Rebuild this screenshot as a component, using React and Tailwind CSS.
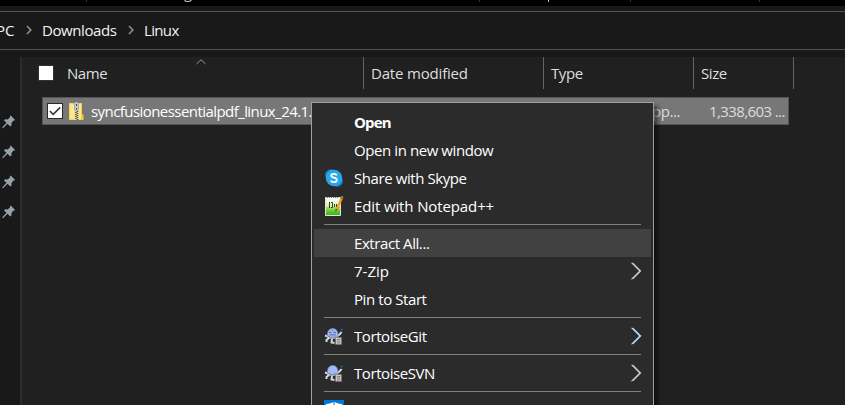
const font = 'font-["Open_Sans","Noto_Sans",sans-serif]';

function Crumb() {
  return (
    <svg className="h-2.5 w-1.5 shrink-0" viewBox="0 0 6 10" fill="none" stroke="#8a8a8a" strokeWidth="1.7">
      <path d="M1 1 L4.8 5 L1 9" />
    </svg>
  );
}

function Pin() {
  return (
    <svg className="h-3.5 w-3.5 shrink-0" viewBox="0 0 14 14" fill="#95a2a9">
      <path d="M8.7 .6 13.1 5 12.2 5.8 11.4 5.6 9.4 8.2 9.6 10.3 8.3 11.4 5.5 8.8 1.3 12.9 .3 13.2 .6 12.1 4.5 7.8 2 5.4 3.1 4.3 5.5 4.4 8 2.4 7.8 1.4Z" />
    </svg>
  );
}

function Zip() {
  return (
    <svg className="h-[19px] w-[15px] shrink-0" viewBox="0 0 15 19">
      <path d="M0 1h13v17H0z" fill="#f5cf56" />
      <path d="M1 2h11v15H1z" fill="#fde690" />
      <path d="M12 12h1.5L14.5 13v5H12z" fill="#f3c93e" />
      <path d="M5 1h5v17H5z" fill="#efdc9a" />
      <path d="M7 8v10" stroke="#4c4c46" strokeWidth="1.6" strokeDasharray="1 1" />
      <path d="M8.5 9v9" stroke="#4c4c46" strokeWidth="1.6" strokeDasharray="1 1" />
      <path d="M5.5 1.5Q5.5 0 7.5 0T9.5 1.5V7L8.5 9h-2l-1-2z" fill="#c6cbd0" stroke="#8c9298" strokeWidth=".6" />
      <path d="M7 2h1v2H7zM7 6h1v1.5H7z" fill="#343a40" />
    </svg>
  );
}

function Skype() {
  return (
    <svg className="h-[18px] w-[18px]" viewBox="0 0 18 18">
      <circle cx="6" cy="6" r="5.8" fill="#1488d3" />
      <circle cx="12" cy="12" r="5.8" fill="#1488d3" />
      <circle cx="9" cy="9" r="8.2" fill="#2aa7ea" />
      <path d="M11.8 6.2Q11 4.9 9 4.9C7.2 4.9 6.2 5.7 6.2 6.8 6.2 9.4 11.8 8 11.8 10.9 11.8 12.3 10.7 13.1 8.9 13.1 7.2 13.1 6.2 12.4 5.9 11.4" fill="none" stroke="#fff" strokeWidth="1.8" />
    </svg>
  );
}

function Notepad() {
  return (
    <svg className="h-5 w-[19px]" viewBox="0 0 19 20">
      <defs>
        <linearGradient id="grass" x1="0" y1="0" x2="0" y2="1">
          <stop offset=".15" stopColor="#f5f8ef" />
          <stop offset=".6" stopColor="#d0ed91" />
          <stop offset=".82" stopColor="#55c923" />
          <stop offset="1" stopColor="#36a514" />
        </linearGradient>
      </defs>
      <path d="M.5 1.5h15v18H.5z" fill="url(#grass)" stroke="#dfe5dc" />
      <path d="M1 11h14v8H1z" fill="#4fbe22" opacity=".45" />
      <path d="M2 1.5h12" stroke="#777" strokeDasharray="1 1" />
      <path d="M4.5 6v6M6 6.5h1.5v5H6M9.5 8v3M11.5 8v3" fill="none" stroke="#303830" />
      <path d="M17 1.5 11.5 14" stroke="#ef9d25" strokeWidth="2.4" />
      <path d="m17.5 0-1.2 3" stroke="#a66c45" strokeWidth="2.4" />
      <path d="m10.6 13 1.8.8-2 2z" fill="#443425" />
    </svg>
  );
}

function Tortoise({ face }) {
  return (
    <svg className="h-[18px] w-5" viewBox="0 0 20 18">
      <path d="M4 9.5 1 8.5M5 11 2.5 13v2M8 12l-.5 3.5 3 .5M12 10l4-3 2-3" fill="none" stroke="#d5d9e1" strokeWidth="2" />
      <path d="M3.6 9.3C2.8 4.5 5.3 1.5 8.8 1.5S14.6 5 13.8 9.3Q8.5 11.5 3.6 9.3Z" fill="#a3baf8" stroke="#7084b8" strokeWidth=".7" />
      <path d="M3.5 10.2Q8.5 12.3 13.5 10.2" stroke="#e3e6ee" strokeWidth="1.2" fill="none" />
      {face && <path d="M5 5.5h2.3M9.7 5.5H12M5.5 8.2l1.6-.7 1.6.7 1.6-.7 1.6.7M8.6 3v1.3" stroke="#4b62a4" fill="none" />}
      <path d="M16.5 1h2.5v4h-2.5z" fill="#123c54" />
      <path d="M17.2 2h1v1h-1z" fill="#36a5ce" />
      <path d="M11.5 10.5H17.5V17.5h-6z" fill="#c9c5c2" stroke="#77716e" strokeWidth=".6" />
      <path d="M13 12.5h3.2M13 14.2h3.2M13 16h3.2" stroke="#77716e" strokeWidth=".8" />
    </svg>
  );
}

function Arrow({ cool }) {
  return (
    <svg className="mr-[9px] h-[18px] w-[11px]" viewBox="0 0 11 18" fill="none" strokeWidth="1">
      <path d="M.1 .8 8.3 9 .1 17.2" stroke="#4aa5e8" />
      <path d="M1.9 .8 10.1 9 1.9 17.2" stroke={cool ? '#8fdcf0' : '#f09a48'} />
      <path d="M1 .8 9.2 9 1 17.2" stroke="#fff" strokeWidth=".9" />
    </svg>
  );
}

function Item({ text, icon, arrow, cool, className = '' }) {
  return (
    <div className={`mx-0.5 flex h-7 shrink-0 items-center text-white ${className}`}>
      <div className="flex w-10 justify-center">{icon}</div>
      <span className="flex-1">{text}</span>
      {arrow && <Arrow cool={cool} />}
    </div>
  );
}

function Rule({ className = '' }) {
  return <div className={`ml-3 mr-3 h-px shrink-0 bg-[#808080] ${className}`} />;
}

export default function App() {
  return (
    <div className={`relative flex h-[405px] w-[845px] flex-col overflow-hidden whitespace-pre bg-[#191919] text-[15px] leading-5 tracking-[-0.42px] text-[#f2f2f2] ${font}`}>
      <div className="relative h-1.5 shrink-0 bg-black">
        <span className="absolute left-[184px] top-[-18px] text-[#bbb]">g</span>
        <i className="absolute left-[86px] top-0 h-0.5 w-px bg-[#333]" />
        <i className="absolute left-[479px] top-0 h-0.5 w-px bg-[#333]" />
        <i className="absolute left-[548px] top-0 h-0.5 w-px bg-[#b9c4d8]" />
        <i className="absolute left-[630px] top-0 h-0.5 w-px bg-[#333]" />
        <i className="absolute left-[759px] top-0 h-0.5 w-px bg-[#333]" />
      </div>
      <div className="mt-[5px] flex h-[39px] shrink-0 items-center border-y border-[#535353] pb-0.5">
        <span className="-ml-1 w-[30px] tracking-[0px]">PC</span>
        <Crumb />
        <span className="ml-[10px] w-[86px]">Downloads</span>
        <Crumb />
        <span className="ml-[10px] tracking-[-0.65px]">Linux</span>
      </div>
      <div className="mt-[7px] flex min-h-0 flex-1">
        <aside className="flex w-[22px] shrink-0 flex-col gap-4 border-r-2 border-[#2b2b2b] pl-0.5 pt-[58px]">
          <Pin /><Pin /><Pin /><Pin />
        </aside>
        <main className="flex min-w-0 flex-1 flex-col bg-[#202020]">
          <div className="flex h-8 items-center text-[#dedede]">
            <div className="relative flex h-full w-[342px] items-center border-r border-[#636363] pl-4">
              <div className="h-4 w-4 border border-[#333] bg-white" />
              <span className="ml-[13px]">Name</span>
              <svg className="absolute left-[174px] top-0.5 h-1.5 w-[10px]" viewBox="0 0 10 6" fill="none" stroke="#999"><path d="M.5 5 5 .7 9.5 5" /></svg>
            </div>
            <div className="flex h-full w-[180px] items-center border-r border-[#636363] pl-[7px] tracking-[-0.18px]">Date modified</div>
            <div className="flex h-full w-[150px] items-center border-r border-[#636363] pl-[7px]">Type</div>
            <div className="flex h-full w-[100px] items-center border-r border-[#636363] pl-[7px]">Size</div>
          </div>
          <div className="ml-5 mt-2 flex h-7 w-[747px] items-center border border-[#555] bg-[#777]">
            <div className="ml-1 flex h-4 w-4 shrink-0 items-center justify-center border border-[#292929] bg-white">
              <svg className="h-3 w-3" viewBox="0 0 12 12" fill="none" stroke="#333" strokeWidth="1.5"><path d="m.8 6 3.4 3.4 7-7" /></svg>
            </div>
            <div className="ml-1.5"><Zip /></div>
            <span className="ml-[7px] w-[561px] tracking-[-0.56px] text-white">syncfusionessentialpdf_linux_24.1.</span>
            <span className="w-[57px] text-[#ddd]">pp...</span>
            <span className="tracking-[-0.6px] text-[#ddd]">1,338,603 ...</span>
          </div>
        </main>
      </div>
      <div className="absolute left-[311px] top-[102px] flex h-[330px] w-[343px] flex-col border border-[#a0a0a0] bg-[#2b2b2b] pt-1.5 shadow-[4px_4px_4px_rgba(0,0,0,0.5)]">
        <Item text="Open" className="pb-0.5 font-bold tracking-[-0.85px]" />
        <Item text="Open in new window" className="pb-0.5" />
        <Item text="Share with Skype" icon={<Skype />} className="pb-0.5" />
        <Item text="Edit with Notepad++" icon={<Notepad />} className="pb-0.5 tracking-[-0.12px]" />
        <Rule className="mb-1 mt-[3px]" />
        <Item text="Extract All..." className="bg-[#414141]" />
        <Item text="7-Zip" arrow className="tracking-[0px]" />
        <Item text="Pin to Start" />
        <Rule className="mb-[5px] mt-1" />
        <Item text="TortoiseGit" icon={<Tortoise face />} arrow cool className="pb-0.5" />
        <Rule className="mb-1 mt-[3px]" />
        <Item text="TortoiseSVN" icon={<Tortoise />} arrow />
        <Rule className="mb-2 mt-1" />
        <svg className="ml-3 h-5 w-5 shrink-0" viewBox="0 0 20 20">
          <path d="M0 0h20v20H0z" fill="#0078d7" />
          <path d="M2 4Q6 4 9.5 2v8H2zM10.5 2Q14 4 18 4v6h-7.5z" fill="#fff" />
        </svg>
      </div>
    </div>
  );
}
